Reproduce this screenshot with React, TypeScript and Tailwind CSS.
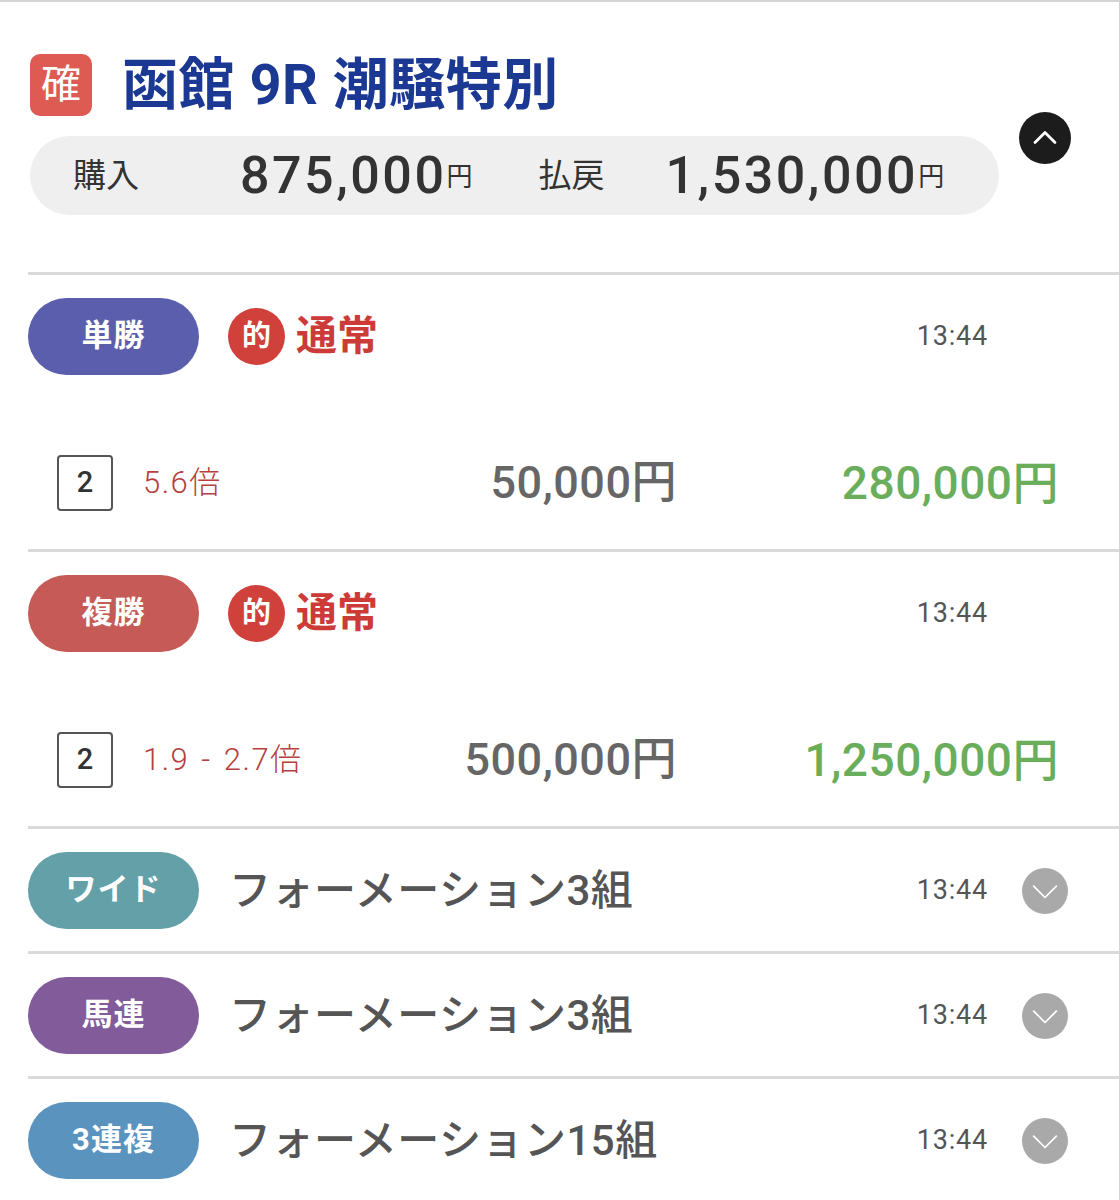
import React from 'react';

interface BetDetail {
  horse: string;
  odds: string;
  stake: string;
  payout: string;
}

interface Bet {
  kind: string;
  color: string;
  time: string;
  detail?: BetDetail;
  summary?: string;
}

const bets: Bet[] = [
  {
    kind: '単勝',
    color: 'bg-[#5b5ead]',
    time: '13:44',
    detail: { horse: '2', odds: '5.6倍', stake: '50,000円', payout: '280,000円' },
  },
  {
    kind: '複勝',
    color: 'bg-[#c55a57]',
    time: '13:44',
    detail: { horse: '2', odds: '1.9 - 2.7倍', stake: '500,000円', payout: '1,250,000円' },
  },
  { kind: 'ワイド', color: 'bg-[#64a0a7]', time: '13:44', summary: 'フォーメーション3組' },
  { kind: '馬連', color: 'bg-[#825b9b]', time: '13:44', summary: 'フォーメーション3組' },
  { kind: '3連複', color: 'bg-[#5b93bf]', time: '13:44', summary: 'フォーメーション15組' },
];

function ChevronUp() {
  return (
    <svg className="w-6 h-6" viewBox="0 0 24 24" fill="none" stroke="white" strokeWidth={2.8} strokeLinecap="round" strokeLinejoin="round">
      <path d="M2 16.5L12 6.5l10 10" />
    </svg>
  );
}

function ChevronDown() {
  return (
    <svg className="w-[26px] h-[26px]" viewBox="0 0 24 24" fill="none" stroke="white" strokeWidth={1.6} strokeLinecap="round" strokeLinejoin="round">
      <path d="M1.5 7.5L12 18 22.5 7.5" />
    </svg>
  );
}

function BetRow({ bet }: { bet: Bet }) {
  return (
    <div className="ml-[28px] border-t-[3px] border-[#dadada]">
      {/* Header */}
      <div className="flex items-center pt-[23px] pb-[22px] h-[122px]">
        <div className={`${bet.color} w-[171px] h-[77px] rounded-full flex items-center justify-center text-white text-[31px] font-bold tracking-[1px]`}>
          {bet.kind}
        </div>
        <div className="flex-1 flex items-center">
          {bet.detail ? (
            <div className="flex items-center ml-[29px]">
              <span className="w-[57px] h-[57px] rounded-full bg-[#d0413c] text-white text-[29px] font-bold flex items-center justify-center">
                的
              </span>
              <span className="ml-[11px] text-[#cc3b37] text-[41px] font-bold leading-none">通常</span>
            </div>
          ) : (
            <span className="ml-[30px] text-[#555] text-[42px] font-medium leading-none tracking-[0.5px]">{bet.summary}</span>
          )}
        </div>
        <span className="text-[#555] text-[27px] tracking-[0.8px]">{bet.time}</span>
        <div className="w-[46px] ml-[34px] mr-[51px] flex justify-center">
          {!bet.detail && (
            <div className="w-[46px] h-[46px] rounded-full bg-[#a9a9a9] flex items-center justify-center">
              <ChevronDown />
            </div>
          )}
        </div>
      </div>

      {/* Detail */}
      {bet.detail && (
        <div className="flex items-center h-[56px] mt-[58px] mb-[38px] pl-[29px] pr-[60px]">
          <span className="w-[56px] h-[56px] border-2 border-[#555] rounded-[4px] flex items-center justify-center text-[#333] text-[29px] font-medium">
            {bet.detail.horse}
          </span>
          <span className="ml-[30px] flex-1 text-[#b5403d] text-[31px] font-light tracking-[1.5px] [word-spacing:3px]">
            {bet.detail.odds}
          </span>
          <span className="text-[#666] text-[45px] font-medium tracking-[0.5px]">{bet.detail.stake}</span>
          <span className="w-[382px] text-right text-[#6aad5b] text-[46px] font-medium tracking-[0.5px]">{bet.detail.payout}</span>
        </div>
      )}
    </div>
  );
}

export default function App() {
  return (
    <div className="w-[1119px] h-[1200px] overflow-hidden bg-white font-[Roboto,'Noto_Sans_CJK_JP',sans-serif] border-t-2 border-[#d4d4d4]">
      {/* Race header */}
      <div className="flex items-start pl-[30px] pb-[57px]">
        <div className="w-[969px]">
          <div className="flex items-center mt-[52px] h-[62px]">
            <span className="w-[62px] h-[62px] rounded-[10px] bg-[#dd5b52] text-white text-[40px] flex items-center justify-center">
              確
            </span>
            <h1 className="ml-[30px] text-[#1b3893] text-[56px] font-bold leading-none tracking-[0.5px]">函館 9R 潮騒特別</h1>
          </div>
          <div className="mt-[20px] h-[79px] rounded-full bg-[#efefef] flex items-center pl-[43px] text-[#333]">
            <span className="text-[33px] w-[167px]">購入</span>
            <span className="text-[52px] font-medium leading-none tracking-[2.5px]">875,000</span>
            <span className="text-[26px] self-end mb-[18px]">円</span>
            <span className="text-[33px] ml-[66px] w-[127px]">払戻</span>
            <span className="text-[52px] font-medium leading-none tracking-[2.5px]">1,530,000</span>
            <span className="text-[26px] self-end mb-[18px]">円</span>
          </div>
        </div>
        <div className="mt-[110px] ml-[20px] w-[52px] h-[52px] rounded-full bg-[#1c1c1c] flex items-center justify-center">
          <ChevronUp />
        </div>
      </div>

      {bets.map((bet, i) => (
        <BetRow key={i} bet={bet} />
      ))}
    </div>
  );
}
